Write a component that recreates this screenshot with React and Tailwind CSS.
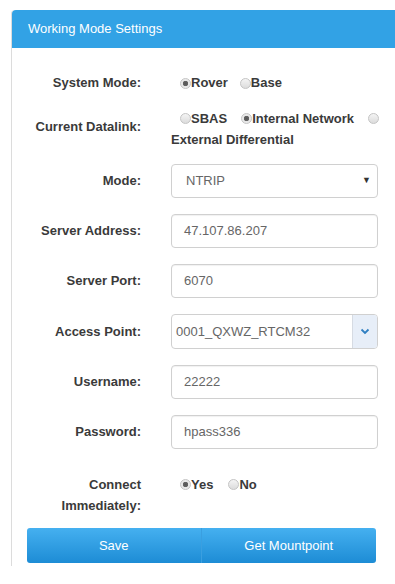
import React from "react";

const Radio = ({ checked }) => (
  <span
    className={`inline-block w-[11px] h-[11px] rounded-full border border-[#c4c4c4] shrink-0 ${
      checked
        ? "bg-[radial-gradient(circle,#555_0,#666_2.5px,#e6e6e6_3px,#f2f2f2_100%)]"
        : "bg-[linear-gradient(#f4f4f4,#dcdcdc)]"
    }`}
  />
);

const Option = ({ checked, children, className = "" }) => (
  <span className={`flex items-center ${className}`}>
    <Radio checked={checked} />
    <span>{children}</span>
  </span>
);

const Label = ({ children, className = "" }) => (
  <div className={`w-[129px] shrink-0 text-right font-bold text-[13px] text-[#3a3a3a] ${className}`}>
    {children}
  </div>
);

const TextInput = ({ value }) => (
  <div className="w-[207px] h-[34px] ml-[30px] border border-[#d0d0d0] rounded-[4px] shadow-[inset_0_1px_1px_rgba(0,0,0,0.06)] flex items-center pl-[12px] text-[13px] text-[#666] bg-white">
    {value}
  </div>
);

const Field = ({ label, children }) => (
  <div className="flex items-center mt-[16px]">
    <Label>{label}</Label>
    {children}
  </div>
);

export default function App() {
  return (
    <div
      className="w-[395px] h-[584px] overflow-hidden bg-white"
      style={{ fontFamily: '"Liberation Sans", Arial, sans-serif' }}
    >
      <div className="ml-[11px] mt-[10px] w-[400px] border-l border-[#dcdcdc] rounded-tl-[4px] pb-[3px]">
        {/* Header */}
        <div className="h-[38px] bg-[#32a2e5] rounded-tl-[4px] flex items-center pl-[16px] text-white text-[13px]">
          Working Mode Settings
        </div>

        <div className="pt-[25px]">
          {/* System Mode */}
          <div className="flex items-center h-[20px]">
            <Label>System Mode:</Label>
            <div className="ml-[39px] flex items-center font-bold text-[13px] text-[#3a3a3a]">
              <Option checked className="mr-[12px]">Rover</Option>
              <Option>Base</Option>
            </div>
          </div>

          {/* Current Datalink */}
          <div className="flex items-center mt-[15px]">
            <Label className="-mt-[5px]">Current Datalink:</Label>
            <div className="ml-[30px] font-bold text-[13px] text-[#3a3a3a] leading-[21px]">
              <div className="flex items-center pl-[9px]">
                <Option className="mr-[14px]">SBAS</Option>
                <Option checked className="mr-[14px]">Internal Network</Option>
                <Radio />
              </div>
              <div>External Differential</div>
            </div>
          </div>

          {/* Mode */}
          <div className="flex items-center mt-[14px]">
            <Label>Mode:</Label>
            <div className="w-[207px] h-[34px] ml-[30px] border border-[#d0d0d0] rounded-[4px] flex items-center justify-between pl-[14px] pr-[6px] text-[13px] text-[#666]">
              <span>NTRIP</span>
              <span className="text-[9px] text-[#333]">▼</span>
            </div>
          </div>

          <Field label="Server Address:">
            <TextInput value="47.107.86.207" />
          </Field>
          <Field label="Server Port:">
            <TextInput value="6070" />
          </Field>

          {/* Access Point */}
          <Field label="Access Point:">
            <div className="w-[207px] h-[35px] ml-[30px] border border-[#d0d0d0] rounded-[4px] flex text-[13px] text-[#666] overflow-hidden">
              <div className="flex-1 flex items-center pl-[4px]">0001_QXWZ_RTCM32</div>
              <div className="w-[25px] border-l border-[#d6dbe3] bg-[#e7eef8] flex items-center justify-center">
                <svg width="10" height="7" viewBox="0 0 10 7">
                  <path d="M1.5 1.5 L5 5 L8.5 1.5" fill="none" stroke="#2f7fc1" strokeWidth="1.8" />
                </svg>
              </div>
            </div>
          </Field>

          <Field label="Username:">
            <TextInput value="22222" />
          </Field>
          <Field label="Password:">
            <TextInput value="hpass336" />
          </Field>

          {/* Connect Immediately */}
          <div className="flex items-start mt-[25px] leading-[21px]">
            <Label>
              Connect
              <br />
              Immediately:
            </Label>
            <div className="ml-[39px] h-[21px] flex items-center font-bold text-[13px] text-[#3a3a3a]">
              <Option checked className="mr-[15px]">Yes</Option>
              <Option>No</Option>
            </div>
          </div>

          {/* Buttons */}
          <div className="ml-[15px] mt-[12px] w-[349px] h-[35px] flex rounded-[3px] overflow-hidden bg-[linear-gradient(#45b0f0,#1d8cd5)] text-white text-[13px]">
            <button className="w-1/2 h-full flex items-center justify-center border-r border-[#3a9fe0]">
              Save
            </button>
            <button className="w-1/2 h-full flex items-center justify-center">
              Get Mountpoint
            </button>
          </div>
        </div>
      </div>
    </div>
  );
}
